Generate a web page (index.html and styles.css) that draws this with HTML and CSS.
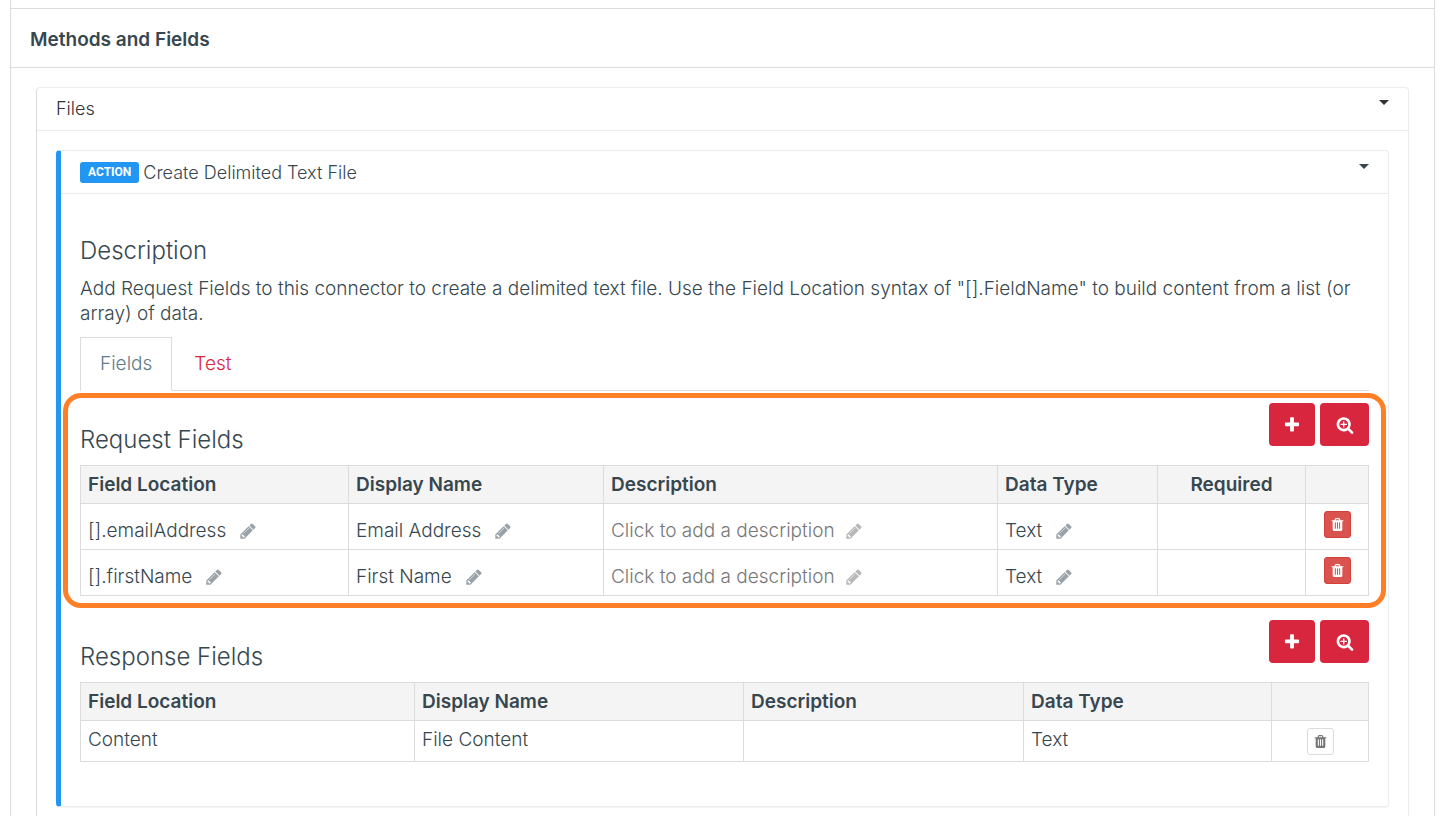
FILE: index.html
```html
<!DOCTYPE html>
<html lang="en">
<head>
<meta charset="utf-8">
<title>Methods and Fields</title>
<link rel="stylesheet" href="styles.css">
</head>
<body>
<svg class="sprite" aria-hidden="true">
  <symbol id="plus" viewBox="0 0 1792 1792"><path d="M1600 736v192q0 40-28 68t-68 28h-416v416q0 40-28 68t-68 28h-192q-40 0-68-28t-28-68v-416h-416q-40 0-68-28t-28-68v-192q0-40 28-68t68-28h416v-416q0-40 28-68t68-28h192q40 0 68 28t28 68v416h416q40 0 68 28t28 68z"/></symbol>
  <symbol id="search-plus" viewBox="0 0 1792 1792"><path d="M1088 800v64q0 13-9.5 22.5t-22.5 9.5h-224v224q0 13-9.5 22.5t-22.5 9.5h-64q-13 0-22.5-9.5t-9.5-22.5v-224h-224q-13 0-22.5-9.5t-9.5-22.5v-64q0-13 9.5-22.5t22.5-9.5h224v-224q0-13 9.5-22.5t22.5-9.5h64q13 0 22.5 9.5t9.5 22.5v224h224q13 0 22.5 9.5t9.5 22.5zm128 32q0-185-131.5-316.5t-316.5-131.5-316.5 131.5-131.5 316.5 131.5 316.5 316.5 131.5 316.5-131.5 131.5-316.5zm512 832q0 53-37.5 90.5t-90.5 37.5q-54 0-90-38l-343-342q-179 124-399 124-143 0-273.5-55.5t-225-150-150-225-55.5-273.5 55.5-273.5 150-225 225-150 273.5-55.5 273.5 55.5 225 150 150 225 55.5 273.5q0 220-124 399l343 343q37 37 37 90z"/></symbol>
  <symbol id="pencil" viewBox="0 0 1792 1792"><path d="M491 1536l91-91-235-235-91 91v107h128v128h107zm523-928q0-22-22-22-10 0-17 7l-542 542q-7 7-7 17 0 22 22 22 10 0 17-7l542-542q7-7 7-17zm-54-192l416 416-832 832h-416v-416zm683 96q0 53-37 90l-166 166-416-416 166-165q36-38 90-38 53 0 91 38l235 234q37 39 37 91z"/></symbol>
  <symbol id="trash" viewBox="0 0 1792 1792"><path d="M704 1376v-704q0-14-9-23t-23-9h-64q-14 0-23 9t-9 23v704q0 14 9 23t23 9h64q14 0 23-9t9-23zm256 0v-704q0-14-9-23t-23-9h-64q-14 0-23 9t-9 23v704q0 14 9 23t23 9h64q14 0 23-9t9-23zm256 0v-704q0-14-9-23t-23-9h-64q-14 0-23 9t-9 23v704q0 14 9 23t23 9h64q14 0 23-9t9-23zm-544-992h448l-48-117q-7-9-17-11h-317q-10 2-17 11zm928 32v64q0 14-9 23t-23 9h-96v948q0 83-47 143.5t-113 60.5h-832q-66 0-113-58.5t-47-141.5v-952h-96q-14 0-23-9t-9-23v-64q0-14 9-23t23-9h309l70-167q15-37 54-63t79-26h320q40 0 79 26t54 63l70 167h309q14 0 23 9t9 23z"/></symbol>
  <symbol id="caret" viewBox="0 0 10 5"><path d="M0 0h10L5 5z"/></symbol>
</svg>
<main class="panel">
  <header class="panel-header"><h1 class="panel-title">Methods and Fields</h1></header>
  <div class="panel-body">
    <section class="card group">
      <header class="card-header">
        <h2 class="card-title">Files</h2>
        <button class="toggle" type="button" aria-label="Toggle Files"><svg><use href="#caret"/></svg></button>
      </header>
      <div class="group-body">
        <article class="card action">
          <header class="card-header">
            <span class="badge">ACTION</span>
            <h3 class="card-title">Create Delimited Text File</h3>
            <button class="toggle" type="button" aria-label="Toggle action"><svg><use href="#caret"/></svg></button>
          </header>
          <div class="action-body">
            <h4 class="heading">Description</h4>
            <p class="intro">Add Request Fields to this connector to create a delimited text file. Use the Field Location syntax of "[].FieldName" to build content from a list (or array) of data.</p>
            <nav class="tabs">
              <a class="tab tab-active" href="#fields">Fields</a>
              <a class="tab" href="#test">Test</a>
            </nav>
            <section class="fields highlighted" id="fields">
              <div class="fields-bar">
                <h4 class="heading">Request Fields</h4>
                <div class="actions">
                  <button class="btn" type="button" aria-label="Add request field"><svg class="icon"><use href="#plus"/></svg></button>
                  <button class="btn btn-wide" type="button" aria-label="Find request fields"><svg class="icon"><use href="#search-plus"/></svg></button>
                </div>
              </div>
              <table class="grid request">
                <thead>
                  <tr><th class="c-location">Field Location</th><th class="c-name">Display Name</th><th>Description</th><th class="c-type">Data Type</th><th class="c-required">Required</th><th class="c-remove"></th></tr>
                </thead>
                <tbody>
                  <tr>
                    <td>[].emailAddress<button class="edit" type="button" aria-label="Edit location"><svg class="icon"><use href="#pencil"/></svg></button></td>
                    <td>Email Address<button class="edit" type="button" aria-label="Edit name"><svg class="icon"><use href="#pencil"/></svg></button></td>
                    <td class="placeholder">Click to add a description<button class="edit" type="button" aria-label="Edit description"><svg class="icon"><use href="#pencil"/></svg></button></td>
                    <td>Text<button class="edit" type="button" aria-label="Edit type"><svg class="icon"><use href="#pencil"/></svg></button></td>
                    <td></td>
                    <td class="remove-cell"><button class="remove remove-danger" type="button" aria-label="Delete field"><svg><use href="#trash"/></svg></button></td>
                  </tr>
                  <tr>
                    <td>[].firstName<button class="edit" type="button" aria-label="Edit location"><svg class="icon"><use href="#pencil"/></svg></button></td>
                    <td>First Name<button class="edit" type="button" aria-label="Edit name"><svg class="icon"><use href="#pencil"/></svg></button></td>
                    <td class="placeholder">Click to add a description<button class="edit" type="button" aria-label="Edit description"><svg class="icon"><use href="#pencil"/></svg></button></td>
                    <td>Text<button class="edit" type="button" aria-label="Edit type"><svg class="icon"><use href="#pencil"/></svg></button></td>
                    <td></td>
                    <td class="remove-cell"><button class="remove remove-danger" type="button" aria-label="Delete field"><svg><use href="#trash"/></svg></button></td>
                  </tr>
                </tbody>
              </table>
            </section>
            <section class="fields">
              <div class="fields-bar">
                <h4 class="heading">Response Fields</h4>
                <div class="actions">
                  <button class="btn" type="button" aria-label="Add response field"><svg class="icon"><use href="#plus"/></svg></button>
                  <button class="btn btn-wide" type="button" aria-label="Find response fields"><svg class="icon"><use href="#search-plus"/></svg></button>
                </div>
              </div>
              <table class="grid response">
                <thead>
                  <tr><th class="c-location">Field Location</th><th class="c-name">Display Name</th><th>Description</th><th class="c-type">Data Type</th><th class="c-remove"></th></tr>
                </thead>
                <tbody>
                  <tr>
                    <td>Content</td><td>File Content</td><td></td><td>Text</td>
                    <td class="remove-cell"><button class="remove" type="button" aria-label="Delete field"><svg><use href="#trash"/></svg></button></td>
                  </tr>
                </tbody>
              </table>
            </section>
          </div>
        </article>
      </div>
    </section>
  </div>
</main>
</body>
</html>
```

FILE: styles.css
```css
* { box-sizing: border-box; }

body {
  margin: 0;
  padding: 0 9px 0 10px;
  overflow: hidden;
  background: #fff;
  color: #37474f;
  font: 300 19px/25px Inter, "Open Sans", sans-serif;
}

h1, h2, h3, h4, p { margin: 0; font-weight: 300; }
button { font: inherit; padding: 0; cursor: pointer; }
svg { display: block; fill: currentColor; }
.sprite { display: none; }
.icon { width: 18px; height: 18px; }

.panel {
  padding-top: 8px;
  border: solid #dcdcdc;
  border-width: 0 1px;
}
.panel-header {
  padding: 18px 19px 15px;
  border: solid #dcdcdc;
  border-width: 1px 0;
}
.panel-title { font-size: 19px; font-weight: 600; }
.panel-body { padding: 19px 25px 0; }

.card {
  border: 1px solid #ececec;
  border-radius: 4px;
}
.card-header {
  display: flex;
  align-items: center;
  gap: 4px;
  padding: 8px 19px 9px;
  border-bottom: 1px solid #ececec;
}
.card-title { font-size: 18px; }
.group { border-left-color: #dcdcdc; }
.group > .card-header { color: #333; }
.group-body { padding: 19px; }
.toggle {
  align-self: flex-start;
  margin-left: auto;
  padding: 4px 0;
  border: 0;
  background: none;
  color: inherit;
}
.toggle svg { width: 10px; height: 5px; }

.action {
  border-left: 5px solid #2196f3;
  box-shadow: 0 1px 1px rgba(0, 0, 0, .05);
}
.action > .card-header { padding: 9px 19px 8px; }
.badge {
  padding: 0 8px;
  border-radius: 3px;
  background: #2196f3;
  color: #fff;
  font: 700 12px/21px Roboto, sans-serif;
}
.action-body { padding: 44px 19px; }
.heading { font-size: 24px; line-height: 26px; }
.intro { margin: 12px 0 11px; }

.tabs {
  display: flex;
  border-bottom: 1px solid #dcdcdc;
}
.tab {
  padding: 14px 22px;
  color: #d9263f;
  text-decoration: none;
}
.tab-active {
  margin-bottom: -1px;
  padding: 13px 19px 14px;
  border: 1px solid #dcdcdc;
  border-bottom-color: #fff;
  color: #607d8b;
}

.fields { padding-bottom: 12px; }
.fields:last-child { padding-bottom: 0; }
.fields-bar {
  display: flex;
  justify-content: space-between;
  align-items: flex-end;
  padding: 12px 0;
}
.actions {
  display: flex;
  gap: 5px;
  margin-bottom: 7px;
}
.btn {
  display: grid;
  place-items: center;
  width: 46px;
  height: 43px;
  border: 0;
  border-radius: 4px;
  background: #d9263f;
  color: #fff;
}
.btn-wide { width: 49px; }

.highlighted { position: relative; }
.highlighted::after {
  content: "";
  position: absolute;
  inset: 2px -17px 0;
  border: 5px solid #ff7f27;
  border-radius: 18px;
  pointer-events: none;
}

.grid {
  width: 100%;
  border-collapse: collapse;
  table-layout: fixed;
}
.grid th, .grid td {
  border: 1px solid #dcdcdc;
  padding: 6px 7px;
  text-align: left;
  vertical-align: top;
}
.grid th { background: #f4f4f4; font-weight: 600; }
.request td { padding: 14px 7px 6px; }
.grid .remove-cell { padding: 7px 7px 6px; }
.grid .c-required { text-align: center; }
.request .c-location { width: 268px; }
.request .c-name { width: 255px; }
.request .c-type { width: 160px; }
.request .c-required { width: 148px; }
.request .c-remove { width: 63px; }
.response .c-location { width: 334px; }
.response .c-name { width: 329px; }
.response .c-type { width: 248px; }
.response .c-remove { width: 97px; }

.edit {
  display: inline-block;
  margin-left: 13px;
  border: 0;
  background: none;
  color: #9aa2a7;
  vertical-align: -3px;
}
.placeholder { color: #777; }
.placeholder .edit { margin-left: 10px; color: #b8b8b8; }

.remove {
  display: grid;
  place-items: center;
  width: 27px;
  height: 27px;
  margin: 0 auto;
  border: 1px solid #dcdcdc;
  border-radius: 3px;
  background: #fff;
  color: #777;
}
.remove svg { width: 15px; height: 15px; }
.remove-danger {
  border-color: #d43f3a;
  background: #d9534f;
  color: #fff;
}
```
